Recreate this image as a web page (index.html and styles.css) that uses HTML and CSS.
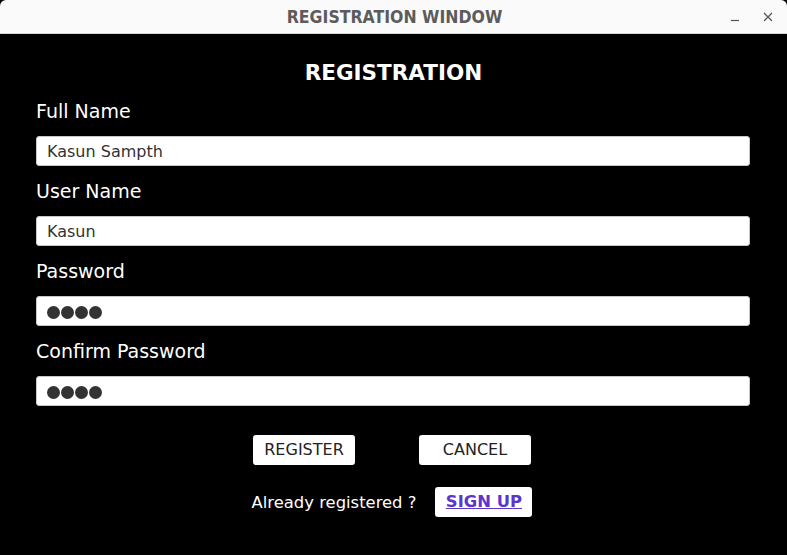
FILE: index.html
```html
<!DOCTYPE html>
<html>
<head>
<meta charset="utf-8">
<link rel="stylesheet" href="styles.css">
</head>
<body>
<div class="window">
  <div class="titlebar">
    <div></div>
    <div class="title">REGISTRATION WINDOW</div>
    <div class="controls">
      <svg class="ctl" width="12" height="12" viewBox="0 0 12 12"><path d="M2 9.5h8" stroke="#555" stroke-width="1.2"/></svg>
      <svg class="ctl" width="12" height="12" viewBox="0 0 12 12"><path d="M2 2l8 8M10 2l-8 8" stroke="#555" stroke-width="1.2"/></svg>
    </div>
  </div>
  <div class="content">
    <h1 class="heading">REGISTRATION</h1>
    <div class="form">
      <div class="label">Full Name</div>
      <div class="field">Kasun Sampth</div>
      <div class="label">User Name</div>
      <div class="field">Kasun</div>
      <div class="label">Password</div>
      <div class="field dots"><span></span><span></span><span></span><span></span></div>
      <div class="label">Confirm Password</div>
      <div class="field dots"><span></span><span></span><span></span><span></span></div>
    </div>
    <div class="buttons">
      <div class="btn btn-register">REGISTER</div>
      <div class="btn btn-cancel">CANCEL</div>
    </div>
    <div class="signup-row">
      <span class="already">Already registered ?</span>
      <div class="btn btn-signup"><a class="signup">SIGN UP</a></div>
    </div>
  </div>
</div>
</body>
</html>
```
FILE: styles.css
```css
html, body {
  margin: 0;
  padding: 0;
  background: #000;
}
.window {
  width: 787px;
  height: 555px;
  background: #000;
  display: flex;
  flex-direction: column;
  font-family: "DejaVu Sans", sans-serif;
}
.titlebar {
  height: 33px;
  background: #fafafa;
  border-bottom: 1px solid #d6d6d6;
  display: grid;
  grid-template-columns: 1fr auto 1fr;
  align-items: center;
  border-radius: 6px 6px 0 0;
}
.title {
  font-family: "DejaVu Sans Condensed", "DejaVu Sans", sans-serif;
  font-weight: bold;
  font-size: 17.5px;
  color: #5c5c5c;
  padding-left: 2px;
}
.controls {
  display: flex;
  justify-content: flex-end;
  gap: 21px;
  padding-right: 13px;
}
.content {
  padding: 27px 37px 0 36px;
  display: flex;
  flex-direction: column;
}
.heading {
  margin: 0;
  text-align: center;
  font-size: 21.5px;
  line-height: 24px;
  font-weight: bold;
  color: #fff;
  padding-left: 1px;
}
.form {
  margin-top: 15px;
  display: flex;
  flex-direction: column;
  gap: 14px;
}
.label {
  color: #fff;
  font-size: 19px;
  line-height: 22px;
}
.field {
  height: 30px;
  box-sizing: border-box;
  background: #fff;
  border: 1px solid #c8c8c8;
  border-radius: 3px;
  padding-left: 10px;
  padding-top: 2px;
  font-size: 16px;
  line-height: 26px;
  color: #333;
  display: flex;
  align-items: center;
}
.dots {
  gap: 1px;
}
.dots span {
  width: 13px;
  height: 13px;
  border-radius: 50%;
  background: #333;
}
.buttons {
  margin-top: 29px;
  display: flex;
  justify-content: center;
  gap: 64px;
  padding-right: 2px;
}
.btn {
  height: 30px;
  box-sizing: border-box;
  background: #fff;
  border-radius: 3px;
  font-size: 16px;
  line-height: 30px;
  text-align: center;
  color: #222;
}
.btn-register { width: 102px; }
.btn-cancel { width: 112px; }
.signup-row {
  margin-top: 22px;
  display: flex;
  justify-content: center;
  align-items: center;
  gap: 19px;
  padding-right: 2px;
}
.already {
  color: #fff;
  font-size: 16.4px;
}
.btn-signup {
  width: 97px;
}
.signup {
  color: #5b36c9;
  font-weight: bold;
  font-size: 16.4px;
  text-decoration: underline;
}
```
